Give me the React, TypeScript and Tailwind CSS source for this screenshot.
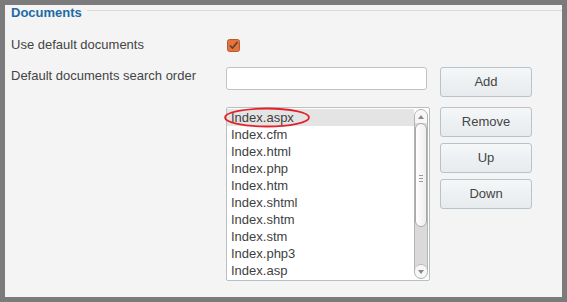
const documents = [
  "Index.aspx",
  "Index.cfm",
  "Index.html",
  "Index.php",
  "Index.htm",
  "Index.shtml",
  "Index.shtm",
  "Index.stm",
  "Index.php3",
  "Index.asp",
];

function ActionButton({ label }: { label: string }) {
  return (
    <button className="w-[92px] h-[30px] rounded-[3px] border border-[#b7c3cb] bg-gradient-to-b from-[#f5f7f8] to-[#e7ebee] text-[13px] text-[#454545]">
      {label}
    </button>
  );
}

function Scrollbar() {
  return (
    <div className="w-[14px] h-full flex flex-col rounded-[7px] border border-[#b3b3b3] bg-[#dadada] overflow-hidden">
      <div className="h-[13px] bg-[#f7f7f7] flex items-center justify-center">
        <svg width="6" height="4" viewBox="0 0 6 4">
          <path d="M0 4 L3 0 L6 4 Z" fill="#8a8a8a" />
        </svg>
      </div>
      <div className="h-[104px] rounded-[6px] border border-[#a9a9a9] bg-gradient-to-r from-[#ffffff] to-[#eeeeee] flex items-end justify-center pb-[44px]">
        <div className="flex flex-col gap-[2px]">
          <div className="w-[4px] h-[1px] bg-[#9a9a9a]" />
          <div className="w-[4px] h-[1px] bg-[#9a9a9a]" />
          <div className="w-[4px] h-[1px] bg-[#9a9a9a]" />
        </div>
      </div>
      <div className="flex-1" />
      <div className="h-[14px] rounded-[6px] border-t border-[#b3b3b3] bg-[#f7f7f7] flex items-center justify-center">
        <svg width="6" height="4" viewBox="0 0 6 4">
          <path d="M0 0 L6 0 L3 4 Z" fill="#8a8a8a" />
        </svg>
      </div>
    </div>
  );
}

export default function App() {
  return (
    <div
      className="w-[567px] h-[302px] bg-[#7b7b7b] pl-[5px] pt-[5px]"
      style={{ fontFamily: '"Liberation Sans", Arial, sans-serif' }}
    >
      <div className="w-[557px] h-[292px] bg-[#f4f4f4] pl-[6px]">
        {/* Section header */}
        <div className="flex h-[15px]">
          <span className="text-[13px] leading-[15px] font-bold text-[#1d6aa5]">
            Documents
          </span>
          <div className="flex-1 ml-[5px] mt-[5px] h-[2px] border-t border-[#d9d9d9] border-b-white" />
        </div>

        {/* Use default documents */}
        <div className="flex items-center mt-[18px] h-[14px]">
          <span className="w-[215px] text-[13px] text-[#444444]">
            Use default documents
          </span>
          <svg width="13" height="13" viewBox="0 0 13 13" className="ml-[1px]">
            <rect x="0.5" y="0.5" width="12" height="12" rx="2" fill="#e6733e" stroke="#b75a31" />
            <path d="M3 6.5 L5.5 9 L10.5 3" fill="none" stroke="#5c4036" strokeWidth="1.6" />
          </svg>
        </div>

        {/* Search order input */}
        <div className="flex items-start mt-[15px]">
          <span className="w-[215px] mt-[1px] text-[13px] leading-[16px] text-[#444444]">
            Default documents search order
          </span>
          <input
            type="text"
            className="w-[201px] h-[23px] rounded-[3px] border border-[#bdc3c7] bg-white outline-none"
          />
          <div className="ml-[13px]">
            <ActionButton label="Add" />
          </div>
        </div>

        {/* Document list */}
        <div className="flex items-start mt-[10px]">
          <div className="w-[215px]" />
          <div className="relative w-[204px] h-[174px] rounded-[2px] border border-[#b7c0c7] bg-white flex pt-[1px] pb-[1px]">
            <ul className="flex-1 text-[13px] text-[#3f3f3f]">
              {documents.map((doc, i) => (
                <li
                  key={doc}
                  className={`h-[17px] leading-[17px] pl-[4px] ${i === 0 ? "bg-[#e4e4e4]" : ""}`}
                >
                  {doc}
                </li>
              ))}
            </ul>
            <div className="pr-[1px]">
              <Scrollbar />
            </div>
            <svg
              width="88"
              height="21"
              viewBox="0 0 88 21"
              className="absolute left-[-4px] top-[-1px]"
            >
              <ellipse cx="44" cy="10.5" rx="42" ry="9" fill="none" stroke="#e3212b" strokeWidth="1.8" />
            </svg>
          </div>
          <div className="ml-[10px] flex flex-col gap-[6px]">
            <ActionButton label="Remove" />
            <ActionButton label="Up" />
            <ActionButton label="Down" />
          </div>
        </div>
      </div>
    </div>
  );
}
